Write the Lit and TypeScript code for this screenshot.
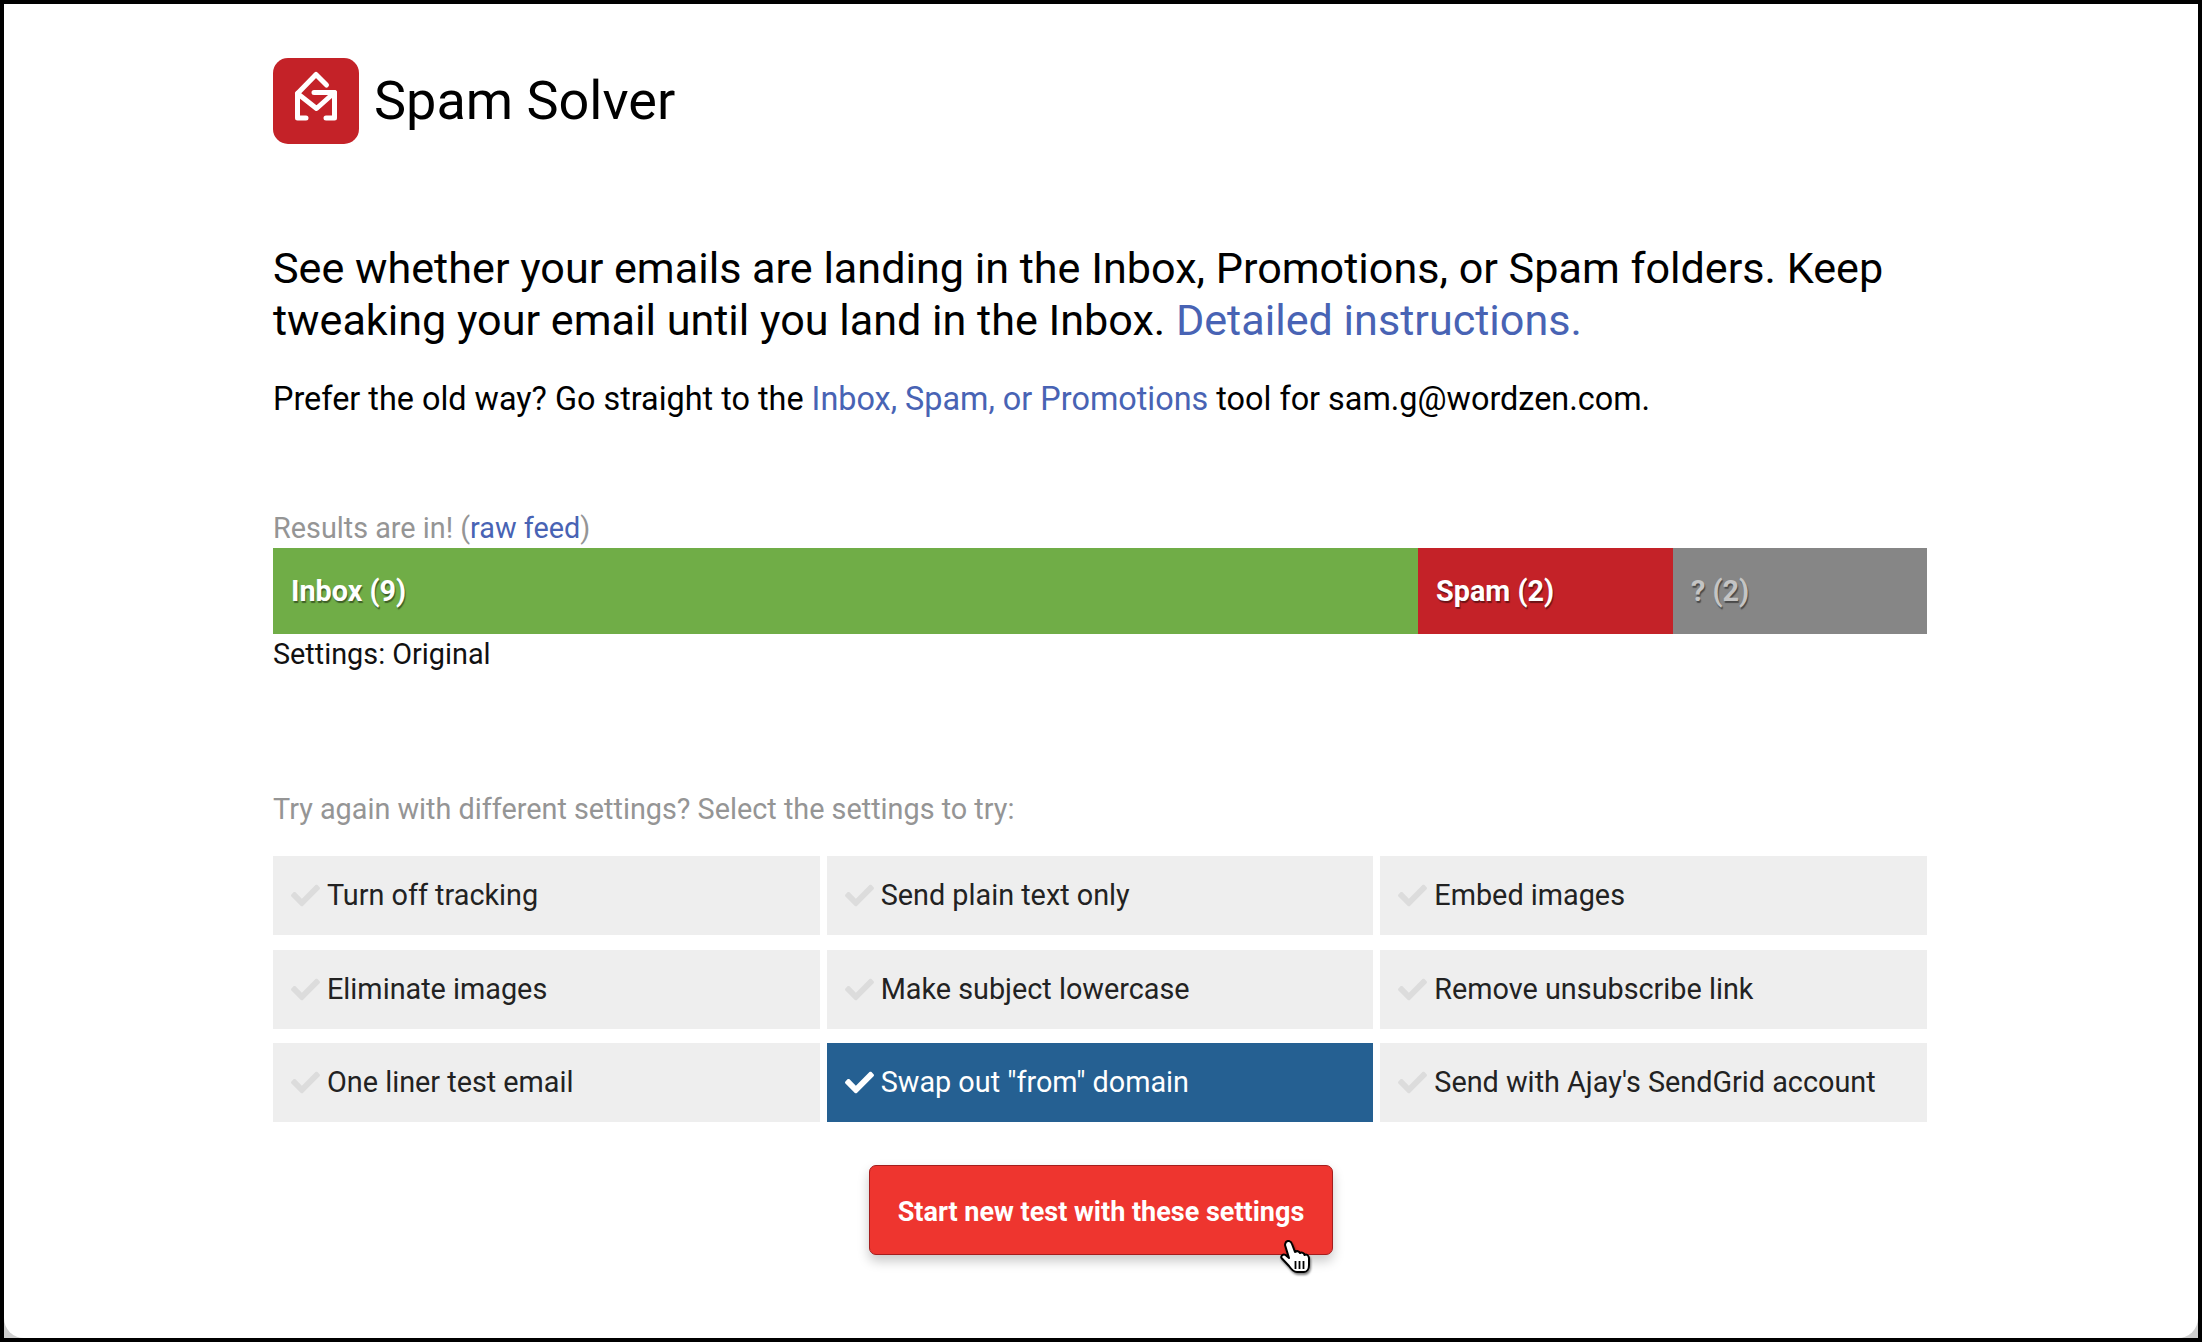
import { LitElement, html, css, svg } from "lit";
import { customElement } from "lit/decorators.js";

const check = svg`<path fill="currentColor" d="M173.898 439.404l-166.4-166.4c-9.997-9.997-9.997-26.206 0-36.204l36.203-36.204c9.997-9.998 26.207-9.998 36.204 0L192 312.69 432.095 72.596c9.997-9.997 26.207-9.997 36.204 0l36.203 36.204c9.997 9.997 9.997 26.206 0 36.204l-294.4 294.401c-9.998 9.997-26.207 9.997-36.204-.001z"/>`;

@customElement("app-root")
export class AppRoot extends LitElement {
  static styles = css`
    :host { display: block; width: 2202px; height: 1342px; background: #000; padding: 4px; box-sizing: border-box; font-family: Roboto, sans-serif; color: #000; overflow: hidden; }
    a { color: #4863b4; text-decoration: none; }
    .backdrop { height: 100%; background: #d0d0d0; }
    .page { height: 100%; box-sizing: border-box; background: #fff; border-radius: 0 0 20px 20px; padding: 54px 271px 0 269px; }
    .brand { display: flex; align-items: center; gap: 15px; height: 86px; font-size: 54px; }
    .brand span { padding-bottom: 2px; }
    .logo { width: 86px; height: 86px; flex: none; }
    .lead { margin: 99px 0 0; font-size: 43.15px; line-height: 52px; }
    .old { margin: 30px 0 0; font-size: 32.38px; line-height: 44px; }
    .label { font-size: 28.8px; line-height: 38px; color: #959595; }
    .results { margin-top: 88px; }
    .bar { display: flex; height: 86px; font-size: 28.8px; font-weight: 700; color: #fff; margin-top: 1px; }
    .seg { display: flex; align-items: center; padding-left: 18px; box-sizing: border-box; text-shadow: 1px 2px 1px rgba(0,0,0,.45); }
    .inbox { width: 1145px; background: #70ad47; }
    .spam { width: 255px; background: #c42228; }
    .unk { flex: 1; background: #868686; color: #c4c4c4; }
    .settings { font-size: 28.8px; line-height: 38px; margin-top: 1px; color: #111; }
    .try { margin-top: 117px; }
    .grid { display: grid; grid-template-columns: repeat(3, 1fr); grid-auto-rows: 79px; column-gap: 7px; row-gap: 14.5px; margin-top: 28px; }
    .tile { display: flex; align-items: center; gap: 7px; padding-left: 18px; background: #eee; color: #222; font-size: 28.8px; line-height: 38px; }
    .tile span { margin-top: -1px; }
    .tile svg { width: 29px; height: 29px; flex: none; color: #dcdcdc; }
    .tile.on { background: #256092; color: #fff; }
    .tile.on svg { color: #fff; }
    .actions { display: flex; justify-content: center; margin-top: 43px; padding-left: 2px; }
    .btn { position: relative; width: 464px; height: 90px; box-sizing: border-box; border: 1px solid #a51d1d; border-radius: 7px; background: #ee352f; color: #fff; font: 700 27px Roboto, sans-serif; box-shadow: 0 6px 12px rgba(0,0,0,.22); padding: 3px 0 0; }
    .cursor { position: absolute; left: 410px; top: 74px; width: 30px; height: 33px; filter: drop-shadow(1px 2px 1px rgba(0,0,0,.5)); }
  `;

  render() {
    const tiles: [string, boolean][] = [
      ["Turn off tracking", false], ["Send plain text only", false], ["Embed images", false],
      ["Eliminate images", false], ["Make subject lowercase", false], ["Remove unsubscribe link", false],
      ["One liner test email", false], ['Swap out "from" domain', true], ["Send with Ajay's SendGrid account", false],
    ];
    return html`
      <div class="backdrop"><div class="page">
        <div class="brand">
          <svg class="logo" viewBox="0 0 86 86">
            <rect width="86" height="86" rx="15" fill="#c42228"/>
            <g fill="none" stroke="#fff" stroke-width="5" stroke-linejoin="round" stroke-linecap="round">
              <path d="M53.5 27 L43 16.5 L24.5 35.5 L24.5 60 L33 60"/>
              <path d="M24.5 35.5 L43.5 50.5 L61.5 34.5 L41 34.5"/>
              <path d="M61.5 34.5 L61.5 60 L53 60"/>
            </g>
          </svg>
          <span>Spam Solver</span>
        </div>
        <p class="lead">See whether your emails are landing in the Inbox, Promotions, or Spam folders. Keep tweaking your email until you land in the Inbox. <a href="#">Detailed instructions.</a></p>
        <p class="old">Prefer the old way? Go straight to the <a href="#">Inbox, Spam, or Promotions</a> tool for sam.g@wordzen.com.</p>
        <div class="results">
          <div class="label">Results are in! (<a href="#">raw feed</a>)</div>
          <div class="bar">
            <div class="seg inbox">Inbox (9)</div>
            <div class="seg spam">Spam (2)</div>
            <div class="seg unk">? (2)</div>
          </div>
          <div class="settings">Settings: Original</div>
        </div>
        <div class="label try">Try again with different settings? Select the settings to try:</div>
        <div class="grid">
          ${tiles.map(([t, on]) => html`<div class="tile ${on ? "on" : ""}"><svg viewBox="0 0 512 512">${check}</svg><span>${t}</span></div>`)}
        </div>
        <div class="actions">
          <button class="btn">Start new test with these settings
            <svg class="cursor" viewBox="0 0 30 33">
              <path d="M6 2 C8 0 11 1 12 4 L15 12 C17 10.5 19 11 20 13 C22 12 24 13 24.5 15 C26.5 14 28.5 15 29 18 L29 25 C29 29 27 32 24 32 L17 32 C13 32 11 29 9 26 L1.5 18 C0.5 16 3 13.5 5.5 15 L9 18 L5 5 C5 4 5.5 3 6 2 Z" fill="#fff" stroke="#000" stroke-width="2" stroke-linejoin="round"/>
              <path d="M15.5 21 V29 M19.5 21 V29 M23.5 21 V29" stroke="#000" stroke-width="1.8"/>
            </svg>
          </button>
        </div>
      </div></div>
    `;
  }
}
